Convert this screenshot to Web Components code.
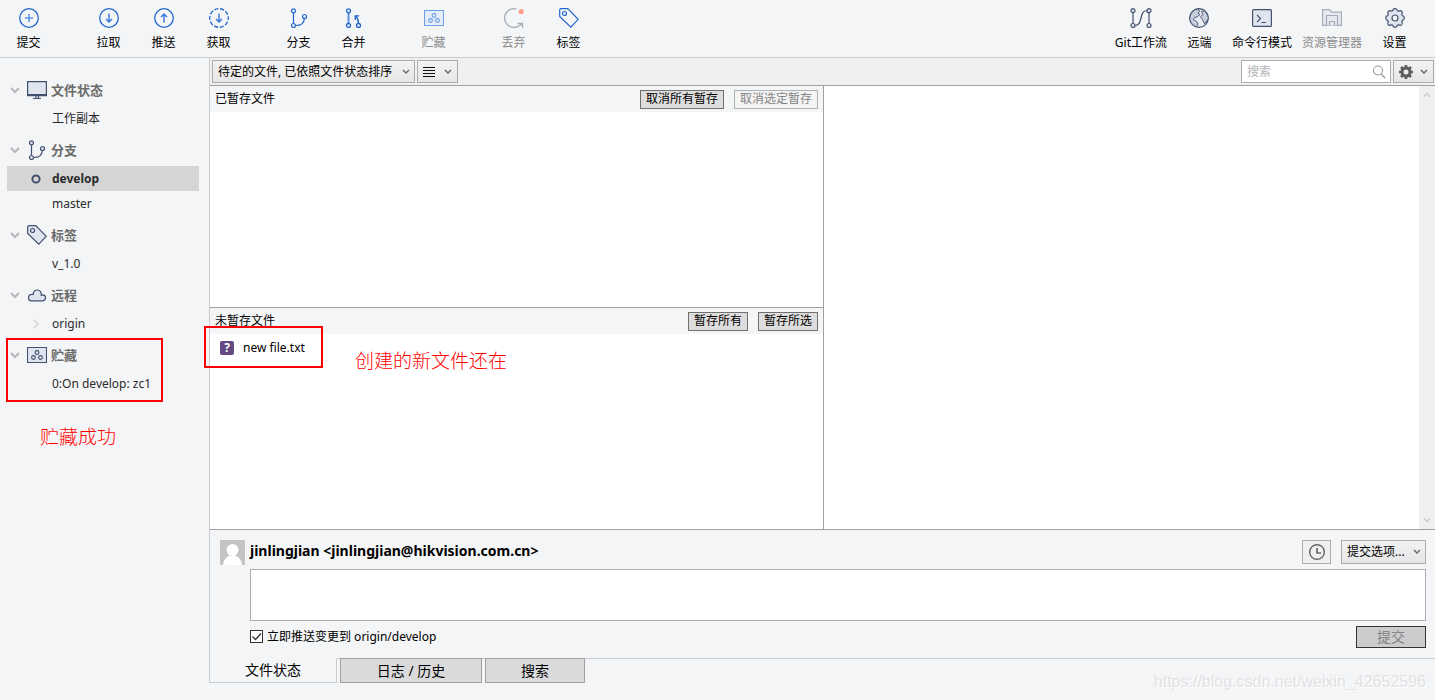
<!DOCTYPE html>
<html lang="zh-CN">
<head>
<meta charset="utf-8">
<title>文件状态</title>
<style>
  html, body { margin: 0; height: 100%; }
  body {
    font: 12px/18px "Noto Sans", "Noto Sans CJK SC", sans-serif;
    color: #000;
    background: #f4f5f7;
    overflow: hidden;
  }
</style>
</head>
<body>
<git-app></git-app>
<script>
const ICONS = {
  commit: ['20', '<g fill="none" stroke="#2166cc" stroke-width="1.3"><circle cx="10" cy="10" r="9.3"/><path d="M10 6v8M6 10h8" stroke="#5b93e6" stroke-width="1.6"/></g>'],
  pull: ['20', '<g fill="none" stroke="#2166cc" stroke-width="1.3"><circle cx="10" cy="10" r="9.3"/><path d="M10 5.5v8.5M7 11l3 3 3-3" stroke="#3b7bdb" stroke-width="1.5"/></g>'],
  push: ['20', '<g fill="none" stroke="#2166cc" stroke-width="1.3"><circle cx="10" cy="10" r="9.3"/><path d="M10 14.5V6M7 9l3-3 3 3" stroke="#3b7bdb" stroke-width="1.5"/></g>'],
  fetch: ['20', '<g fill="none" stroke="#2166cc" stroke-width="1.3"><circle cx="10" cy="10" r="9.3" stroke-dasharray="4.2 1.64" stroke-dashoffset="2.1"/><path d="M10 5.5v8.5M7 11l3 3 3-3" stroke="#3b7bdb" stroke-width="1.5"/></g>'],
  branch: ['20', '<g fill="var(--fill,none)" stroke="var(--ink,#2166cc)" stroke-width="1.2"><path fill="none" d="M4.5 5v10M7 17.5c5 0 8-2.5 8.3-6.8"/><circle cx="4.5" cy="2.8" r="2"/><circle cx="4.5" cy="17.5" r="2"/><circle cx="15.500" cy="8.5" r="2"/></g>'],
  merge: ['20', '<g fill="none" stroke="#2166cc" stroke-width="1.3"><path d="M4.5 5v10" stroke="#5b93e6" stroke-width="2"/><circle cx="4.5" cy="2.8" r="2"/><circle cx="4.5" cy="17.5" r="2"/><circle cx="14.5" cy="17.5" r="2"/><path d="M14.5 15.300c0-3-.8-5.300-2.800-7M11.200 12V7.800h4"/></g>'],
  stash: ['20', '<g fill="var(--fill,#e4edfb)" stroke="var(--ink,#6f9fe6)" stroke-width="1.1"><path d="M.5 2.500h19v15H.5z"/><g fill="none"><circle cx="10" cy="7.500" r="1.900"/><circle cx="6.500" cy="12.500" r="1.900"/><circle cx="13.500" cy="12.500" r="1.900"/></g></g>'],
  discard: ['20', '<path d="M12.500 1.100A9.300 9.300 0 1 0 13 18.800q3-1 5.300-3.300M13.500 15.500h5v4.500" fill="none" stroke="#a5abb8" stroke-width="1.300"/><circle cx="17.200" cy="3.500" r="2.600" fill="#ff9d8c"/>'],
  tag: ['20', '<g fill="var(--fill,none)" stroke="var(--ink,#2166cc)" stroke-width="1.200"><path d="M.7 1.600L1.600.7h7.200l10.400 10.600-7.400 7.900L.7 8.500z"/><circle cx="5.500" cy="5.500" r="2" fill="none"/></g>'],
  flow: ['22', '<g fill="#dfe4ee" stroke="#42526e" stroke-width="1.200"><path fill="none" d="M3 5v10M19 5v10M5 17.500c8.500 0 3.500-15 12-15"/><circle cx="3" cy="2.700" r="2"/><circle cx="3" cy="17.500" r="2"/><circle cx="19" cy="2.700" r="2"/><circle cx="19" cy="17.500" r="2"/></g>'],
  globe: ['20', '<circle cx="10" cy="10" r="9.300" fill="#e8ebf1" stroke="#42526e" stroke-width="1.200"/><path d="M2 5.500L6 1.800l3-.8 1.500 2-1.500 2.300 2 1.200-2.500 2.200-2.700.7-1.500 2.200 3.200 1.800 1.500 2.600-1.500 2.800C3 17.300.8 13.500.8 10zM12.500 3.500l3-.8 3 4.300.8 3.500-2 3-1.800 2.200-2-4.200-2-2.500 2.200-2.500z" fill="#c8cedb" stroke="#42526e" stroke-width=".9"/>'],
  terminal: ['20', '<rect x=".6" y="1.600" width="18.800" height="16.800" rx="1" fill="#dfe4ee" stroke="#42526e" stroke-width="1.200"/><path d="M5 7l3.500 3.500L5 14M9.500 14.500H14" fill="none" stroke="#42526e" stroke-width="1.200"/>'],
  explorer: ['20', '<g fill="#e6e9ef" stroke="#a5adba" stroke-width="1.200"><path d="M.6 17.400V1.600h7l2 2.500h9.800v13.300z"/><path d="M4.500 17.300V7.500h11v9.800"/><path d="M7.500 17.300v-3.800h5v3.800"/></g>'],
  cog: ['20', '<g fill="#dfe4ee" stroke="#42526e" stroke-width="1.200" stroke-linejoin="round"><path d="M7.700 2.600Q8 .7 10 .7t2.300 1.900l1.300.6q1.700-1.200 3.100.1t.1 3.100l.6 1.300q1.900.3 1.900 2.300t-1.900 2.300l-.6 1.300q1.200 1.700-.1 3.100t-3.100.1l-1.300.6Q12 19.300 10 19.300t-2.300-1.900l-1.300-.6q-1.700 1.200-3.100-.1t-.1-3.100l-.6-1.300Q.7 12 .7 10t1.900-2.300l.6-1.300q-1.200-1.700.1-3.100t3.100-.1z"/><circle cx="10" cy="10" r="3" fill="#f4f5f7"/></g>'],
  monitor: ['20', '<path d="M.6 1.600h18.800v14H.6z" fill="#dfe4ee" stroke="#42526e" stroke-width="1.200"/><path d="M1 14.500h18M9 16v2M11.500 16v2M6 18.500h8" fill="none" stroke="#42526e" stroke-width="1.200"/>'],
  cloud: ['20', '<path d="M4.500 15.800h11a3 3 0 0 0 .8-5.900c-1 0-1.600.2-2 .4.500-3-1.300-5.300-3.800-5.300-2.400 0-4.200 1.700-4.300 4.400C3 8.900 1.500 10.600 1.500 12.800c0 1.800 1.300 3 3 3z" fill="#dfe4ee" stroke="#42526e" stroke-width="1.200"/>'],
  down: ['10', '<path d="M1 3l4 4 4-4" fill="none" stroke="#b4b6b9" stroke-width="2"/>'],
  right: ['10', '<path d="M3 1l4 4-4 4" fill="none" stroke="#d4d5d7" stroke-width="1.500"/>'],
  ring: ['10', '<circle cx="5" cy="5" r="3.600" fill="none" stroke="#42526e" stroke-width="2"/>'],
  caret: ['8', '<path d="M1 2l3 3 3-3" fill="none" stroke="#666" stroke-width="1.400"/>'],
  up: ['8', '<path d="M1 5.500l3-3 3 3" fill="none" stroke="#c6c6c6" stroke-width="1.200"/>'],
  dn: ['8', '<path d="M1 2.500l3 3 3-3" fill="none" stroke="#c6c6c6" stroke-width="1.200"/>'],
  lines: ['12', '<path d="M0 1.500h12M0 4.500h12M0 7.500h12M0 10.500h12" stroke="#111" stroke-width="1"/>'],
  search: ['14', '<circle cx="6" cy="5.500" r="4.500" fill="none" stroke="#999" stroke-width="1.100"/><path d="M9 9l4 4" stroke="#999" stroke-width="1.400"/>'],
  gear: ['14', '<circle cx="7" cy="7" r="4" fill="none" stroke="#5d5d5d" stroke-width="3"/><path d="M7 0v3M7 11v3M0 7h3M11 7h3M2 2l2.200 2.200M9.800 9.800L12 12M12 2L9.800 4.200M4.200 9.800L2 12" stroke="#5d5d5d" stroke-width="2.600"/>'],
  clock: ['18', '<circle cx="9" cy="9" r="7.300" fill="none" stroke="#6b6b6b" stroke-width="1.500"/><path d="M9 5v5h4" fill="none" stroke="#6b6b6b" stroke-width="1.700"/>'],
  check: ['13', '<path d="M2.500 6.500l3 3 5.500-6" fill="none" stroke="#333" stroke-width="1.300"/>'],
  avatar: ['25', '<path d="M0 0h25v25H0z" fill="#c4c4c4"/><circle cx="12.500" cy="10" r="6" fill="#fff"/><path d="M3 25c.5-5 3.500-8.500 7-9.500h5c3.500 1 6.500 4.500 7 9.500z" fill="#fff"/>']
};

function define(name, css, html) {
  const tpl = document.createElement('template');
  const make = typeof html === 'function' ? html : () => html;
  customElements.define(name, class extends HTMLElement {
    connectedCallback() {
      if (this.shadowRoot) return;
      tpl.innerHTML = `<style>*{box-sizing:border-box}${css}</style>${make(this)}`;
      this.attachShadow({ mode: 'open' }).append(tpl.content.cloneNode(true));
    }
  });
}
const attr = (el, key, fallback = '') => el.getAttribute(key) ?? fallback;

define('ui-icon', ':host{display:block;flex:none}svg{display:block}', el => {
  const [size, art] = ICONS[attr(el, 'name')];
  const h = size === '22' ? 20 : size;
  return `<svg width="${size}" height="${h}" viewBox="0 0 ${size} ${h}" aria-hidden="true">${art}</svg>`;
});

define('tool-button', `
  :host{display:block}
  button{display:flex;flex-direction:column;align-items:center;gap:6px;min-width:55px;height:57px;padding:8px 5px 0;border:0;background:none;font:inherit;color:#000;white-space:nowrap}
  button:disabled{color:#8c8c8c}`,
  el => `<button type="button" ${el.hasAttribute('disabled') ? 'disabled' : ''}><ui-icon name="${attr(el, 'icon')}"></ui-icon><slot></slot></button>`);

define('tool-bar', `
  :host{display:flex;justify-content:space-between;height:58px;padding:0 13px 0 1px;border-bottom:1px solid #c8cbcf;background:#f4f5f7}
  nav{display:flex;gap:25px}
  div{display:flex}`, `
  <nav>
    <div><tool-button icon="commit">提交</tool-button></div>
    <div><tool-button icon="pull">拉取</tool-button><tool-button icon="push">推送</tool-button><tool-button icon="fetch">获取</tool-button></div>
    <div><tool-button icon="branch">分支</tool-button><tool-button icon="merge">合并</tool-button></div>
    <div><tool-button icon="stash" disabled>贮藏</tool-button></div>
    <div><tool-button icon="discard" disabled>丢弃</tool-button><tool-button icon="tag">标签</tool-button></div>
  </nav>
  <div><tool-button icon="flow">Git工作流</tool-button><tool-button icon="globe">远端</tool-button><tool-button icon="terminal">命令行模式</tool-button><tool-button icon="explorer" disabled>资源管理器</tool-button><tool-button icon="cog">设置</tool-button></div>`);

define('side-section', `
  :host{display:block;position:relative}
  h2{display:flex;align-items:center;height:35px;margin:0;padding:3px 0 0 3px;font-size:13px;font-weight:700;color:#6b6b6b}
  .art{margin:0 4px 0 7px;--fill:#dfe4ee;--ink:#42526e}`,
  el => `<h2><ui-icon name="down"></ui-icon><ui-icon class="art" name="${attr(el, 'icon')}"></ui-icon>${attr(el, 'label')}</h2><slot></slot>`);

define('side-item', `
  :host{display:block}
  a{display:flex;align-items:center;height:25px;color:#2b2b2b;text-decoration:none;white-space:nowrap}
  span{display:flex;width:45px;padding-left:24px}
  :host([current]) a{background:#d5d5d5;font-weight:700}`,
  el => `<a href="#"><span>${el.hasAttribute('icon') ? `<ui-icon name="${attr(el, 'icon')}"></ui-icon>` : ''}</span><slot></slot></a>`);

define('red-box', ':host{position:absolute;border:2px solid #f00;pointer-events:none}', '');
define('red-note', ':host{position:absolute;font-size:19px;line-height:24px;font-weight:300;font-family:"Noto Sans CJK SC",sans-serif;color:#f00;white-space:nowrap}', '<slot></slot>');

define('side-bar', `
  :host{display:block;padding:13px 10px 0 7px}
  red-box{inset:2px 36px -6px -1px}
  red-note{left:33px;top:88px}`, `
  <nav>
  <side-section icon="monitor" label="文件状态"><side-item>工作副本</side-item></side-section>
  <side-section icon="branch" label="分支"><side-item icon="ring" current>develop</side-item><side-item>master</side-item></side-section>
  <side-section icon="tag" label="标签"><side-item>v_1.0</side-item></side-section>
  <side-section icon="cloud" label="远程"><side-item icon="right">origin</side-item></side-section>
  <side-section icon="stash" label="贮藏"><side-item>0:On develop: zc1</side-item><red-box></red-box><red-note>贮藏成功</red-note></side-section>
  </nav>`);

define('drop-down', `
  :host{display:inline-grid;align-items:center}
  select,ui-icon{grid-area:1/1}
  select{appearance:none;height:100%;width:100%;padding:0 20px 0 5px;border:1px solid #acacac;border-radius:0;background:linear-gradient(#f2f2f2,#e6e6e6);font:inherit;color:#000}
  ui-icon{justify-self:end;margin-right:5px;pointer-events:none}`,
  el => `<select aria-label="${attr(el, 'label')}"><option>${attr(el, 'value')}</option></select><ui-icon name="caret"></ui-icon>`);

define('menu-button', `
  :host{display:block}
  button{display:flex;align-items:center;justify-content:space-between;height:100%;width:100%;padding:0 5px;border:1px solid #acacac;background:linear-gradient(#f2f2f2,#e6e6e6)}`,
  el => `<button type="button" aria-label="${attr(el, 'label')}"><ui-icon name="${attr(el, 'icon')}"></ui-icon><ui-icon name="caret"></ui-icon></button>`);

define('filter-bar', `
  :host{display:flex;gap:2px;height:28px;padding:2px 1px 2px 2px;border-bottom:1px solid #a0a0a0;background:#f0f0f0}
  drop-down{width:203px}
  menu-button{width:41px}
  label{display:grid;align-items:center;width:150px;margin-left:auto}
  input,ui-icon{grid-area:1/1}
  input{width:100%;height:100%;padding:0 24px 0 5px;border:1px solid #abadb3;background:#fff;font:inherit;outline:0}
  input::placeholder{color:#b4b4b4}
  ui-icon{justify-self:end;margin-right:5px}`, `
  <drop-down label="排序" value="待定的文件, 已依照文件状态排序"></drop-down>
  <menu-button label="视图" icon="lines"></menu-button>
  <label><input type="text" aria-label="搜索" placeholder="搜索"><ui-icon name="search"></ui-icon></label>
  <menu-button label="选项" icon="gear"></menu-button>`);

define('push-button', `
  :host{display:block}
  button{width:100%;height:100%;padding:0 5px;border:1px solid #707070;background:#ddd;font:inherit;line-height:1;color:#000;white-space:nowrap}
  button:disabled{border-color:#adb2b5;background:#f4f4f4;color:#838383}`,
  el => `<button type="button" ${el.hasAttribute('disabled') ? 'disabled' : ''}><slot></slot></button>`);

define('file-pane', `
  :host{display:block;position:relative;flex:1;min-height:0;background:#fff}
  header{display:flex;align-items:center;gap:10px;height:26px;padding:0 5px;background:#f4f5f7}
  h3{margin:0 auto 0 0;font:inherit}
  ::slotted(push-button){height:19px}`,
  el => `<header><h3>${attr(el, 'label')}</h3><slot name="actions"></slot></header><slot></slot>`);

define('file-row', `
  :host{display:flex;align-items:center;gap:9px;height:28px;padding-left:10px}
  b{width:14px;height:14px;border-radius:2px;background:#654982;color:#fff;font-size:12px;line-height:14px;text-align:center}`,
  '<b>?</b><slot></slot>');

define('work-area', `
  :host{display:flex;flex:1;min-height:0;border-bottom:1px solid #a0a0a0}
  .files{display:flex;flex-direction:column;flex:none;width:calc(round(down, 50%, 1px) + 2px);border-right:1px solid #a0a0a0}
  .files file-pane+file-pane{border-top:1px solid #a0a0a0}
  .diff{display:flex;flex:1;justify-content:flex-end;background:#fff}
  .scroll{display:flex;flex-direction:column;justify-content:space-between;align-items:center;width:16px;padding:5px 0;background:#f0f0f0}
  red-box{left:-6px;top:18px;width:119px;height:42px}
  red-note{left:145px;top:40px}`, `
  <div class="files">
    <file-pane label="已暂存文件"><push-button slot="actions">取消所有暂存</push-button><push-button slot="actions" disabled>取消选定暂存</push-button></file-pane>
    <file-pane label="未暂存文件"><push-button slot="actions">暂存所有</push-button><push-button slot="actions">暂存所选</push-button>
      <file-row>new file.txt</file-row><red-box></red-box><red-note>创建的新文件还在</red-note></file-pane>
  </div>
  <div class="diff"><div class="scroll"><ui-icon name="up"></ui-icon><ui-icon name="dn"></ui-icon></div></div>`);

define('commit-form', `
  :host{display:block;height:128px;padding:10px 9px 0 10px}
  form{display:grid;grid-template-columns:25px 1fr;column-gap:5px}
  .who{display:flex;align-items:flex-start;gap:10px;height:25px}
  strong{margin-right:auto;font-size:14px;line-height:22px}
  .clock{width:29px;height:24px;padding:0;border:1px solid #acacac;background:#f0f0f0;display:grid;place-items:center}
  drop-down{width:85px;height:24px}
  textarea,.foot{grid-column:2}
  textarea{width:100%;height:52px;margin-top:4px;padding:4px;border:1px solid #abadb3;background:#fff;font:inherit;resize:none;outline:0}
  .foot{display:flex;justify-content:space-between;align-items:flex-start;padding-top:5px}
  label{display:grid;grid-template-columns:13px auto;column-gap:4px;align-items:center;height:21px}
  input,label ui-icon{grid-area:1/1}
  input{appearance:none;width:13px;height:13px;margin:0;border:1px solid #333;background:#fff}
  .go{width:70px;height:22px;padding:0;border:1px solid #333;background:#ccc;color:#838383;font:inherit;font-size:14px;line-height:1}`, `
  <form>
    <ui-icon name="avatar"></ui-icon>
    <div class="who"><strong>jinlingjian &lt;jinlingjian@hikvision.com.cn&gt;</strong>
      <button class="clock" type="button" aria-label="历史"><ui-icon name="clock"></ui-icon></button>
      <drop-down label="提交选项" value="提交选项..."></drop-down></div>
    <textarea aria-label="提交信息"></textarea>
    <div class="foot"><label><input type="checkbox" checked><ui-icon name="check"></ui-icon><span>立即推送变更到 origin/develop</span></label>
      <button class="go" type="button" disabled>提交</button></div>
  </form>`);

define('view-tabs', `
  :host{display:flex;height:25px;margin-left:-1px}
  button{height:25px;padding:0;border:1px solid #a0a0a0;background:#dadada;font:inherit;font-size:14px;line-height:1;color:#000;width:100px;margin-right:3px}
  button.wide{width:142px}
  .on{width:128px;margin:0;padding-bottom:2px;border-color:#c8cbcf;border-top-color:transparent;background:none}
  .tail{display:flex;flex:1;padding-left:3px;border-top:1px solid #c8cbcf}
  .tail button{margin-top:-1px}`, `
  <button class="on" type="button">文件状态</button>
  <div class="tail"><button class="wide" type="button">日志 / 历史</button><button type="button">搜索</button></div>`);

define('git-app', `
  :host{display:flex;flex-direction:column;height:100vh;position:relative}
  .body{display:flex;flex:1;min-height:0;padding-bottom:17px}
  side-bar{flex:none;width:209px}
  main{display:flex;flex-direction:column;flex:1;min-width:0;border-left:1px solid #c8cbcf}
  .mark{position:absolute;right:9px;bottom:8px;font:16px/20px "Liberation Sans",sans-serif;color:#e1e2e4;text-shadow:1px 1px 0 #fff}`, `
  <tool-bar></tool-bar>
  <div class="body">
    <side-bar></side-bar>
    <main><filter-bar></filter-bar><work-area></work-area><commit-form></commit-form><view-tabs></view-tabs></main>
  </div>
  <div class="mark">https://blog.csdn.net/weixin_42652596</div>`);
</script>
</body>
</html>
